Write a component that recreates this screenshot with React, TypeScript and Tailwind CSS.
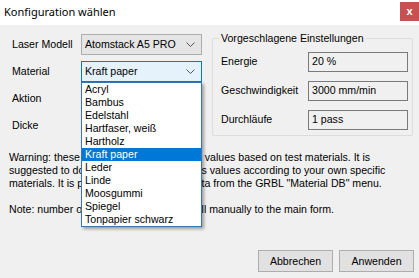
import React from 'react';

const materials = [
  'Acryl',
  'Bambus',
  'Edelstahl',
  'Hartfaser, weiß',
  'Hartholz',
  'Kraft paper',
  'Leder',
  'Linde',
  'Moosgummi',
  'Spiegel',
  'Tonpapier schwarz',
];

const Chevron: React.FC = () => (
  <svg width="9" height="5" viewBox="0 0 9 5" className="shrink-0">
    <polyline points="0.5,0.5 4.5,4.5 8.5,0.5" fill="none" stroke="#555" strokeWidth="1" />
  </svg>
);

const Combo: React.FC<{ value: string; focused?: boolean }> = ({ value, focused }) => (
  <div
    className={
      focused
        ? 'flex h-[21px] w-[121px] items-center justify-between border border-[#0078d7] bg-[#e5f1fb] pl-[3px] pr-[6px]'
        : 'flex h-[21px] w-[121px] items-center justify-between border border-[#adadad] bg-[#e5e5e5] pl-[3px] pr-[6px]'
    }
  >
    <span>{value}</span>
    <Chevron />
  </div>
);

const Field: React.FC<{ label: string; value: string }> = ({ label, value }) => (
  <div className="flex h-[29px] items-center">
    <span className="w-[87px]">{label}</span>
    <div className="flex h-[20px] w-[100px] items-center border border-[#7a7a7a] bg-[#f0f0f0] pl-[3px]">{value}</div>
  </div>
);

export default function App() {
  return (
    <div
      className="relative h-[278px] w-[419px] overflow-hidden bg-[#f0f0f0] text-[10.6px] leading-[13px] text-black"
      style={{ fontFamily: '"Liberation Sans", Arial, sans-serif' }}
    >
      {/* Title bar */}
      <div className="flex h-[25px] items-start justify-between bg-white">
        <span
          className="pl-[4px] pt-[4px] text-[11px] leading-[16px]"
          style={{ fontFamily: '"Noto Sans", "Open Sans", sans-serif' }}
        >
          Konfiguration wählen
        </span>
        <div className="mt-[2px] flex h-[19px] w-[19px] items-center justify-center bg-[#c75050] text-[11px] font-bold leading-none text-white">
          x
        </div>
      </div>

      {/* Upper part */}
      <div className="flex pl-[12px] pt-[9px]">
        <div className="flex w-[200px] flex-col">
          <div className="flex h-[27px] items-start">
            <span className="mt-[4px] w-[69px]">Laser Modell</span>
            <Combo value="Atomstack A5 PRO" />
          </div>
          <div className="flex h-[27px] items-start">
            <span className="mt-[4px] w-[69px]">Material</span>
            <Combo value="Kraft paper" focused />
          </div>
          <div className="flex h-[27px] items-start">
            <span className="mt-[4px] w-[69px]">Aktion</span>
          </div>
          <div className="flex h-[27px] items-start">
            <span className="mt-[4px] w-[69px]">Dicke</span>
          </div>
        </div>

        {/* Group box */}
        <div className="relative mt-[4px] h-[98px] w-[201px] rounded-[2px] border border-[#dcdcdc] pl-[8px] pt-[8px]">
          <span className="absolute -top-[7px] left-[6px] bg-[#f0f0f0] px-[2px]">Vorgeschlagene Einstellungen</span>
          <Field label="Energie" value="20 %" />
          <Field label="Geschwindigkeit" value="3000 mm/min" />
          <Field label="Durchläufe" value="1 pass" />
        </div>
      </div>

      {/* Notes */}
      <div className="mt-[9px] whitespace-pre pl-[9px]">
        <div>Warning: these values are only reference values based on test materials. It is</div>
        <div>suggested to do your own tests and set its values according to your own specific</div>
        <div>materials. It is possible to manage the data from the GRBL "Material DB" menu.</div>
        <div>&nbsp;</div>
        <div>Note: number of passes will be set as well manually to the main form.</div>
      </div>

      {/* Buttons */}
      <div className="absolute bottom-[6px] right-[5px] flex gap-[6px]">
        <button className="h-[22px] w-[75px] border border-[#adadad] bg-[#e1e1e1]">Abbrechen</button>
        <button className="h-[22px] w-[75px] border border-[#adadad] bg-[#e1e1e1]">Anwenden</button>
      </div>

      {/* Open drop-down list */}
      <div className="absolute left-[81px] top-[82px] w-[121px] border border-[#3a74b8] bg-white shadow-[2px_2px_3px_rgba(0,0,0,0.35)]">
        {materials.map((m) => (
          <div
            key={m}
            className={
              m === 'Kraft paper'
                ? 'h-[13px] bg-[#0078d7] pl-[3px] leading-[13px] text-white'
                : 'h-[13px] pl-[3px] leading-[13px]'
            }
          >
            {m}
          </div>
        ))}
      </div>
    </div>
  );
}
